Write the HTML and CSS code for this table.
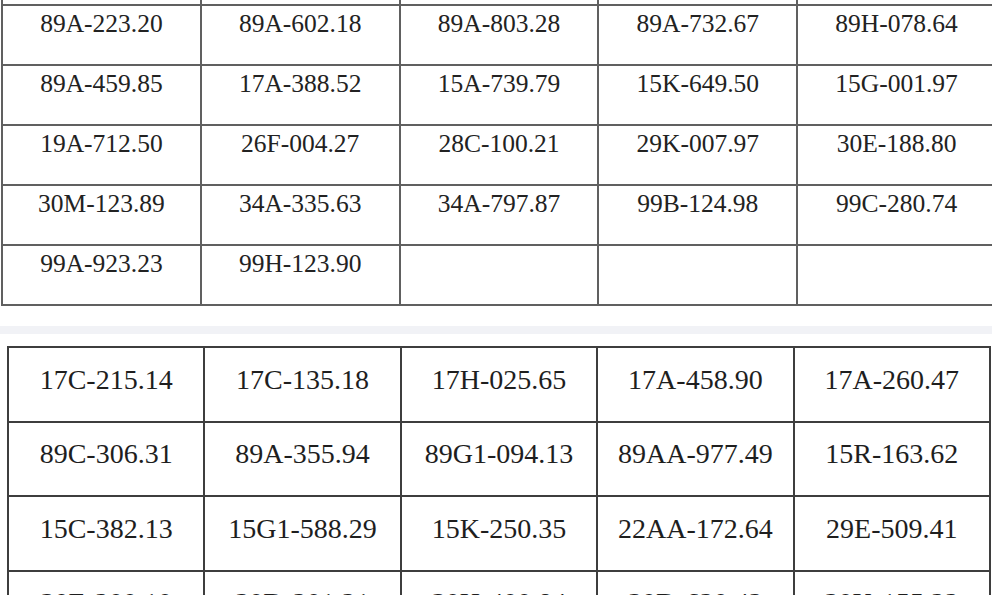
FILE: index.html
```html
<!DOCTYPE html>
<html lang="vi">
<head>
<meta charset="utf-8">
<title>Danh sách biển số</title>
<link rel="stylesheet" href="styles.css">
</head>
<body>
<main class="page">
  <section class="sheet sheet-top">
    <table class="plates plates-top">
      <colgroup><col><col><col><col><col></colgroup>
      <tbody>
        <tr class="row-hidden"><td></td><td></td><td></td><td></td><td></td></tr>
        <tr><td>89A-223.20</td><td>89A-602.18</td><td>89A-803.28</td><td>89A-732.67</td><td>89H-078.64</td></tr>
        <tr><td>89A-459.85</td><td>17A-388.52</td><td>15A-739.79</td><td>15K-649.50</td><td>15G-001.97</td></tr>
        <tr><td>19A-712.50</td><td>26F-004.27</td><td>28C-100.21</td><td>29K-007.97</td><td>30E-188.80</td></tr>
        <tr><td>30M-123.89</td><td>34A-335.63</td><td>34A-797.87</td><td>99B-124.98</td><td>99C-280.74</td></tr>
        <tr><td>99A-923.23</td><td>99H-123.90</td><td></td><td></td><td></td></tr>
      </tbody>
    </table>
  </section>

  <div class="divider"></div>

  <section class="sheet sheet-bottom">
    <table class="plates plates-bottom">
      <colgroup><col><col><col><col><col></colgroup>
      <tbody>
        <tr><td>17C-215.14</td><td>17C-135.18</td><td>17H-025.65</td><td>17A-458.90</td><td>17A-260.47</td></tr>
        <tr><td>89C-306.31</td><td>89A-355.94</td><td>89G1-094.13</td><td>89AA-977.49</td><td>15R-163.62</td></tr>
        <tr><td>15C-382.13</td><td>15G1-588.29</td><td>15K-250.35</td><td>22AA-172.64</td><td>29E-509.41</td></tr>
        <tr><td>30E-200.10</td><td>30D-201.21</td><td>30H-400.84</td><td>30D-620.42</td><td>30K-155.22</td></tr>
      </tbody>
    </table>
  </section>
</main>
</body>
</html>
```

FILE: styles.css
```css
html, body {
  margin: 0;
  padding: 0;
  background: #ffffff;
  overflow: hidden;
}

.page {
  width: 992px;
  height: 595px;
  overflow: hidden;
  font-family: "Liberation Serif", "Times New Roman", serif;
  color: #222222;
}

.sheet-top {
  margin-top: -56px;
  padding-left: 1px;
  width: 1000px;
}

.plates {
  border-collapse: collapse;
  table-layout: fixed;
}

.plates td {
  text-align: center;
  white-space: nowrap;
  padding: 0;
  box-sizing: border-box;
}

.plates-top {
  width: 996px;
}

.plates-top td {
  height: 60px;
  border: 2px solid #606060;
  vertical-align: top;
  padding-top: 3px;
  font-size: 25.5px;
  line-height: 29px;
  color: #222222;
}

.divider {
  margin-top: 20px;
  height: 8px;
  background: #f1f2f6;
  margin-bottom: 12px;
}

.sheet-bottom {
  padding-left: 7px;
}

.plates-bottom {
  width: 984px;
}

.plates-bottom td {
  height: 74.5px;
  border: 2px solid #3e3e3e;
  vertical-align: middle;
  padding-bottom: 9px;
  font-size: 28px;
  line-height: 32px;
  color: #1e1e1e;
}
```
